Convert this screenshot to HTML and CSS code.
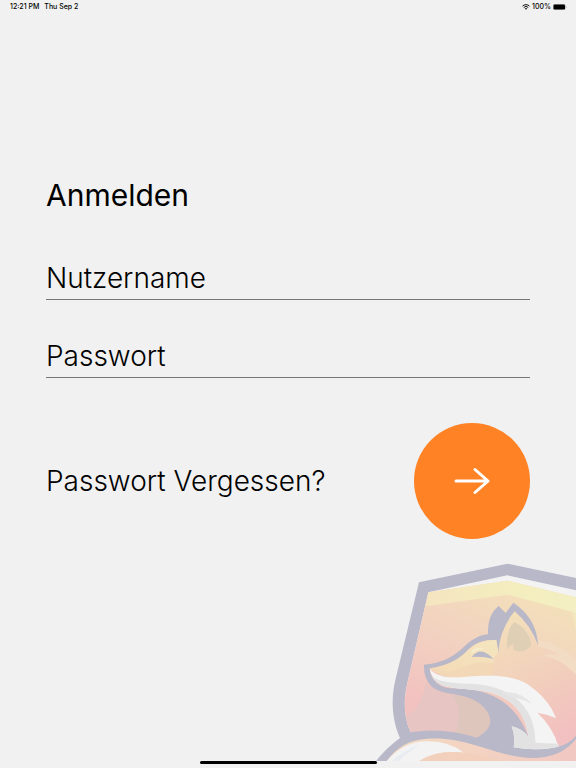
FILE: index.html
```html
<!DOCTYPE html>
<html lang="de">
<head>
    <meta charset="UTF-8">
    <meta name="viewport" content="width=device-width, initial-scale=1.0">
    <title>Anmelden</title>
    <link rel="stylesheet" href="styles.css">
</head>
<body>

    <!-- Status bar -->
    <header class="status-bar">
        <div class="status-group">
            <span>12:21 PM</span>
            <span>Thu Sep 2</span>
        </div>
        <div class="status-right">
            <svg class="wifi" viewBox="0 0 16 12" aria-hidden="true">
                <path d="M1 4.2a10 10 0 0 1 14 0M3.500 6.900a6.500 6.500 0 0 1 9 0" fill="none" stroke="#111" stroke-width="2"/>
                <path d="M5.500 9a3.600 3.600 0 0 1 5 0L8 11.600z" fill="#111"/>
            </svg>
            <span>100%</span>
            <svg class="battery" viewBox="0 0 28 12" aria-hidden="true">
                <rect x="0.500" y="0.500" width="24" height="11" rx="3" fill="none" stroke="#888"/>
                <rect x="1" y="1" width="23" height="10" rx="2.500" fill="#000"/>
                <path d="M26 4q2 2 0 4z" fill="#888"/>
            </svg>
        </div>
    </header>

    <!-- Login form -->
    <main class="login">
        <h1>Anmelden</h1>
        <form class="login-form">
            <input type="text" name="username" placeholder="Nutzername" aria-label="Nutzername">
            <input type="password" name="password" placeholder="Passwort" aria-label="Passwort">
            <div class="actions">
                <a href="#">Passwort Vergessen?</a>
                <button type="submit" class="submit" aria-label="Anmelden">
                    <svg viewBox="0 0 36 28" aria-hidden="true">
                        <path d="M2 14H34M21 2.500L34 14L21 25.500"/>
                    </svg>
                </button>
            </div>
        </form>
    </main>

    <!-- Fox logo -->
    <svg class="fox" viewBox="0 0 618 618" aria-hidden="true">
        <defs>
            <linearGradient id="sky" gradientUnits="userSpaceOnUse" x1="420" y1="90" x2="240" y2="480">
                <stop offset="0" stop-color="#f3dfba"/>
                <stop offset="0.500" stop-color="#f2d2c0"/>
                <stop offset="1" stop-color="#f2c2c0"/>
            </linearGradient>
            <linearGradient id="band" x1="0" y1="0" x2="1" y2="0">
                <stop offset="0" stop-color="#f4e5c0"/>
                <stop offset="0.600" stop-color="#f4edbe"/>
                <stop offset="1" stop-color="#f3efc2"/>
            </linearGradient>
            <linearGradient id="fur" gradientUnits="userSpaceOnUse" x1="360" y1="210" x2="520" y2="560">
                <stop offset="0" stop-color="#f3dfba"/>
                <stop offset="0.500" stop-color="#f2d0bc"/>
                <stop offset="1" stop-color="#f2c0c0"/>
            </linearGradient>
            <linearGradient id="snout" x1="0" y1="1" x2="1" y2="0">
                <stop offset="0" stop-color="#f3d9b4"/>
                <stop offset="1" stop-color="#f4e6c0"/>
            </linearGradient>
            <linearGradient id="tail" x1="0" y1="0" x2="1" y2="0">
                <stop offset="0" stop-color="#f3dcc2"/>
                <stop offset="1" stop-color="#f2c8c2"/>
            </linearGradient>
        </defs>

        <!-- shield -->
        <path d="M147 82L412 26L618 69V618H18Q50 578 90 549C66 495 62 435 76 375Z" fill="#b9b8c8"/>
        <path d="M175 112L412 61L618 106V590L122 532C100 485 101 430 112 385Z" fill="#f3f3f3"/>
        <path d="M175 112L412 77L618 127V570H350L122 532C100 485 101 430 112 385Z" fill="url(#sky)"/>
        <path d="M175 112L412 77L618 127V190L606 170L412 119L167 154Z" fill="url(#band)"/>
        <path d="M606 170L618 174V225Z" fill="#f4e7be"/>

        <!-- shadow under the chin -->
        <path d="M165 385C164 430 140 465 108 487L122 532Q220 515 320 548Q390 510 340 455C290 405 210 430 165 385Z" fill="#e6c5c2"/>
        <path d="M245 420C274 455 270 500 255 532L320 548Q390 510 340 455C310 425 280 425 245 420Z" fill="#dfc6bd"/>

        <!-- neck and body -->
        <path d="M380 255L500 262Q570 275 618 325V545Q580 575 540 585L400 380Z" fill="url(#fur)"/>
        <path d="M505 255C550 264 590 288 618 315V360C590 330 560 308 519 302Q545 294 570 302Q540 280 505 275Z" fill="#f3dcc4"/>
        <path d="M162 329C210 326 245 308 275 282C300 258 325 239 354 238C354 200 360 174 386 153L407 174L430 143C470 170 502 210 504 270L385 292L379 255C330 252 305 270 285 294C255 322 220 333 179 340C180 370 205 398 240 400C340 400 430 425 475 545L568 574Q594 568 618 543V563Q560 612 470 608C350 600 280 548 122 553L90 549L122 532Q220 515 320 548Q390 510 340 455C295 409 220 425 185 395Q160 370 162 329Z" fill="#b9b8c8"/>
        <path d="M179 340C230 333 265 316 295 284Q326 254 379 255L385 292L400 370C330 373 230 376 179 340Z" fill="url(#snout)"/>
        <path d="M240 350C285 337 318 316 368 325Q410 314 420 372L300 369C260 371 210 368 183 343Z" fill="#f3d8b8"/>
        <path d="M385 292Q390 220 434 169Q482 210 504 270L485 375H370V310Z" fill="url(#fur)"/>
        <path d="M412 284C407 242 420 210 434 202C462 214 480 242 484 269C470 291 445 294 431 284L429 268Q418 272 412 284Z" fill="#decfb5"/>
        <path d="M305 306Q333 270 370 312Q336 303 305 306Z" fill="#b9b8c8"/>
        <path d="M302 298Q317 285 343 281Q325 275 308 284Z" fill="#f5edcd"/>

        <!-- white chin and chest -->
        <path d="M179 341C202 369 245 369 290 365C375 360 430 360 475 389C515 418 543 448 558 490Q530 476 502 473Q548 515 566 575Q500 590 431 577Q437 545 425 514Q455 520 475 545C466 470 420 425 350 410C300 400 265 404 220 392Q184 374 179 341Z" fill="#f4f4f4"/>
        <path d="M185 363C220 392 290 381 345 391C440 409 496 465 496 563L566 566V575Q500 590 431 577Q437 545 425 514Q455 520 475 545C466 470 420 425 350 410C300 400 265 404 220 392Q195 383 185 363Z" fill="#e2e2e2"/>
        <path d="M395 412Q455 407 486 449Q460 430 427 428Z" fill="#e5e5e5"/>

        <!-- tail -->
        <path d="M50 618Q95 555 170 551C300 545 360 600 480 609Q570 612 618 552V618Z" fill="url(#tail)"/>
        <path d="M50 618Q105 556 175 559Q240 560 281 593Q200 584 148 618Z" fill="#f3f3f3"/>
        <path d="M65 618Q110 580 150 570Q105 598 88 618Z" fill="#e9edf1"/>
        <path d="M148 618Q200 584 281 593Q340 600 405 618Z" fill="#f3d0bc"/>
    </svg>

    <div class="home-indicator"></div>

</body>
</html>
```
FILE: styles.css
```css
* {
    box-sizing: border-box;
}
body {
    font-family: Inter, "Liberation Sans", sans-serif;
    margin: 0;
    min-height: 100vh;
    display: flex;
    flex-direction: column;
    background-color: #f1f1f1;
    color: #000;
}
.status-bar {
    display: flex;
    justify-content: space-between;
    padding: 2px 9px 0 10px;
    font-size: 7px;
    line-height: 10px;
    font-weight: 500;
}
.status-group {
    display: flex;
    gap: 5px;
}
.status-right {
    display: flex;
    align-items: center;
    gap: 2px;
}
.wifi {
    width: 8px;
    height: 6px;
}
.battery {
    width: 14px;
    height: 6px;
}
.login {
    padding: 163px 46px 0;
}
h1 {
    margin: 0 0 41px;
    font-size: 30px;
    line-height: 40px;
    font-weight: 400;
}
.login-form {
    display: flex;
    flex-direction: column;
    gap: 34px;
}
input {
    width: 100%;
    height: 44px;
    padding: 0;
    border: none;
    border-bottom: 1px solid #777;
    border-radius: 0;
    background: none;
    outline: none;
    color: #000;
    font-family: inherit;
    font-size: 28px;
    font-weight: 300;
}
input::placeholder {
    color: #000;
    opacity: 1;
}
.actions {
    display: flex;
    align-items: center;
    justify-content: space-between;
    margin-top: 11px;
}
.actions a {
    color: #000;
    font-size: 28px;
    font-weight: 300;
    text-decoration: none;
}
.submit {
    display: flex;
    align-items: center;
    justify-content: center;
    width: 116px;
    height: 116px;
    padding: 0;
    border: none;
    border-radius: 50%;
    background-color: #ff8225;
    cursor: pointer;
}
.submit svg {
    width: 36px;
    height: 28px;
    fill: none;
    stroke: #fff;
    stroke-width: 3;
    stroke-linecap: round;
    stroke-linejoin: round;
}
.fox {
    width: 206px;
    height: 206px;
    margin-top: auto;
    margin-left: auto;
}
.home-indicator {
    width: 177px;
    height: 3px;
    margin: 0 auto 4px;
    border-radius: 2px;
    background-color: #000;
}
```
